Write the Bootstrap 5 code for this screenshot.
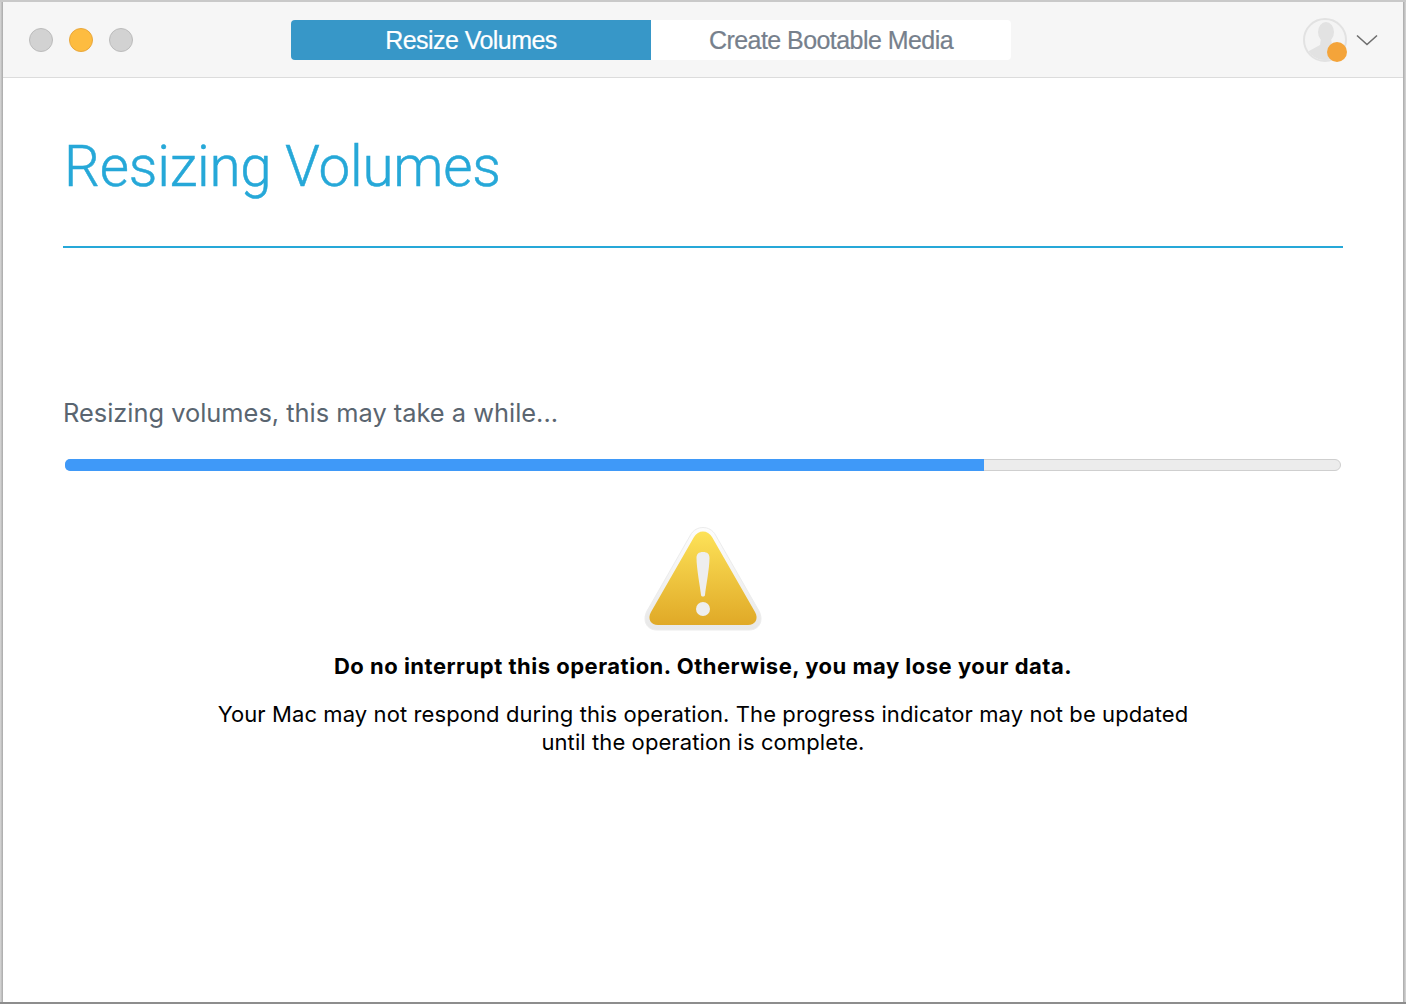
<!DOCTYPE html>
<html lang="en">
<head>
<meta charset="utf-8">
<title>Resizing Volumes</title>
<link href="https://cdn.jsdelivr.net/npm/bootstrap@5.3.0/dist/css/bootstrap.min.css" rel="stylesheet">
<style>
html,body{height:100%;background:#fff;overflow:hidden}
body{font-family:"Liberation Sans",Arial,sans-serif}
.win-frame{height:1004px;width:1406px;padding:2px 3px 2px 3px;background:linear-gradient(#c9c9c9,#c9c9c9) top/100% 2px no-repeat,linear-gradient(#8d8d8d,#8d8d8d) bottom/100% 2px no-repeat,linear-gradient(90deg,#d8d8d8,#a9a9a9) left/3px 100% no-repeat,linear-gradient(90deg,#a9a9a9,#d8d8d8) right/3px 100% no-repeat,#fff}
.win-inner{height:100%;background:#fff}
.title-strip{height:76px;background:#f6f6f6;border-bottom:1px solid #dcdcdc;padding:0 25px 0 26px}
.traffic{width:24px;height:24px;border-radius:50%;background:#d2d2d2;border:1px solid #bcbcbc}
.traffic-on{background:#fdbc40;border-color:#e9a73c}
.traffic-row{gap:16px}
.seg-wrap{left:288px;top:18px;width:720px;height:40px}
.seg-btn{width:360px;height:40px;font-size:25px;letter-spacing:-.55px;line-height:40px;text-align:center;padding:0 0 2px;border:0;-webkit-text-stroke:.2px currentColor}
.seg-on{background:#3797c8;color:#fff;border-radius:4px 0 0 4px}
.seg-off{background:#fff;color:#76808c;border-radius:0 4px 4px 0}
.acct{gap:7px}
.main-pane{padding:0 60px}
.big-title{font-family:Roboto,"Liberation Sans",sans-serif;font-weight:300;font-size:56.5px;line-height:66px;color:#26a8d8;margin:56px 0 0 1px;letter-spacing:-.2px;-webkit-text-stroke:.5px #26a8d8}
.title-rule{height:2px;background:#26a8d8;opacity:1;border:0;margin:46px 0 0}
.status-line{font-family:Inter,"Liberation Sans",sans-serif;font-size:25.4px;line-height:32px;color:#5a6570;margin:149px 0 0}
.bar-track{height:12px;margin:30px 2px 0;background:#ececec;border:1px solid #cfcfcf;border-radius:6px}
.bar-fill{background:#3f99f8;border-radius:5px 0 0 5px;margin:-1px 0 -1px -1px;width:72.16%}
.warn-ico{display:block;margin:54px auto 0}
.warn-head{font-family:Inter,"Liberation Sans",sans-serif;font-weight:700;font-size:22px;line-height:28px;letter-spacing:.5px;color:#000;margin:19px 0 0}
.warn-body{font-family:Inter,"Liberation Sans",sans-serif;font-size:22px;line-height:28px;letter-spacing:.09px;color:#000;margin:20px 0 0}
</style>
</head>
<body>
<div class="win-frame">
<div class="win-inner d-flex flex-column">
  <header class="title-strip d-flex align-items-center justify-content-between position-relative">
    <div class="traffic-row d-flex">
      <span class="traffic"></span><span class="traffic traffic-on"></span><span class="traffic"></span>
    </div>
    <div class="seg-wrap d-flex position-absolute">
      <button type="button" class="seg-btn seg-on">Resize Volumes</button>
      <button type="button" class="seg-btn seg-off">Create Bootable Media</button>
    </div>
    <div class="acct d-flex align-items-center">
      <svg width="46" height="46" viewBox="0 0 46 46" aria-hidden="true">
        <defs><clipPath id="av"><circle cx="22" cy="23" r="20"/></clipPath></defs>
        <circle cx="22" cy="23" r="21" fill="#f4f4f4" stroke="#e2e2e2" stroke-width="2"/>
        <g clip-path="url(#av)" fill="#e2e2e2">
          <ellipse cx="23" cy="15" rx="8" ry="10"/>
          <path d="M18 21h10l1 7 12 6v11H6V34l11-6z"/>
        </g>
        <circle cx="34" cy="35" r="10" fill="#f4a43a"/>
      </svg>
      <svg width="22" height="12" viewBox="0 0 22 12" aria-hidden="true"><path d="M1 1.5l10 9 10-9" fill="none" stroke="#6e6e6e" stroke-width="1.6"/></svg>
    </div>
  </header>
  <main class="main-pane flex-grow-1">
    <h1 class="big-title">Resizing Volumes</h1>
    <hr class="title-rule">
    <p class="status-line">Resizing volumes, this may take a while...</p>
    <div class="bar-track d-flex"><div class="bar-fill"></div></div>
    <svg class="warn-ico" width="120" height="108" viewBox="0 0 120 108" aria-hidden="true">
      <defs>
        <linearGradient id="wg" x1="0" y1="0" x2="0" y2="1"><stop offset="0" stop-color="#fde258"/><stop offset="1" stop-color="#e0a927"/></linearGradient>
        <linearGradient id="wb" x1="0" y1="0" x2="0" y2="1"><stop offset="0" stop-color="#fdfdfd"/><stop offset="1" stop-color="#e8e8e8"/></linearGradient>
      </defs>
      <path d="M47.500 10C53 0 67 0 72.500 10L116 86C121 96 116 105 106 105H14C4 105 -1 96 4 86Z" fill="url(#wb)" stroke="#ececec" stroke-width="1"/>
      <path d="M51 12C55 4.500 65 4.500 69 12L112 87C116 94 112 100 105 100H15C8 100 4 94 8 87Z" fill="url(#wg)"/>
      <path d="M60 27c4.500 0 6.500 2 6.500 6 0 10-3.500 28-4.500 37-.2 2-3.800 2-4 0-1-9-4.500-27-4.500-37 0-4 2-6 6.500-6z" fill="#eeeeee"/>
      <circle cx="60" cy="84" r="7" fill="#eeeeee"/>
    </svg>
    <p class="warn-head text-center">Do no interrupt this operation. Otherwise, you may lose your data.</p>
    <p class="warn-body text-center">Your Mac may not respond during this operation. The progress indicator may not be updated<br>until the operation is complete.</p>
  </main>
</div>
</div>
</body>
</html>
